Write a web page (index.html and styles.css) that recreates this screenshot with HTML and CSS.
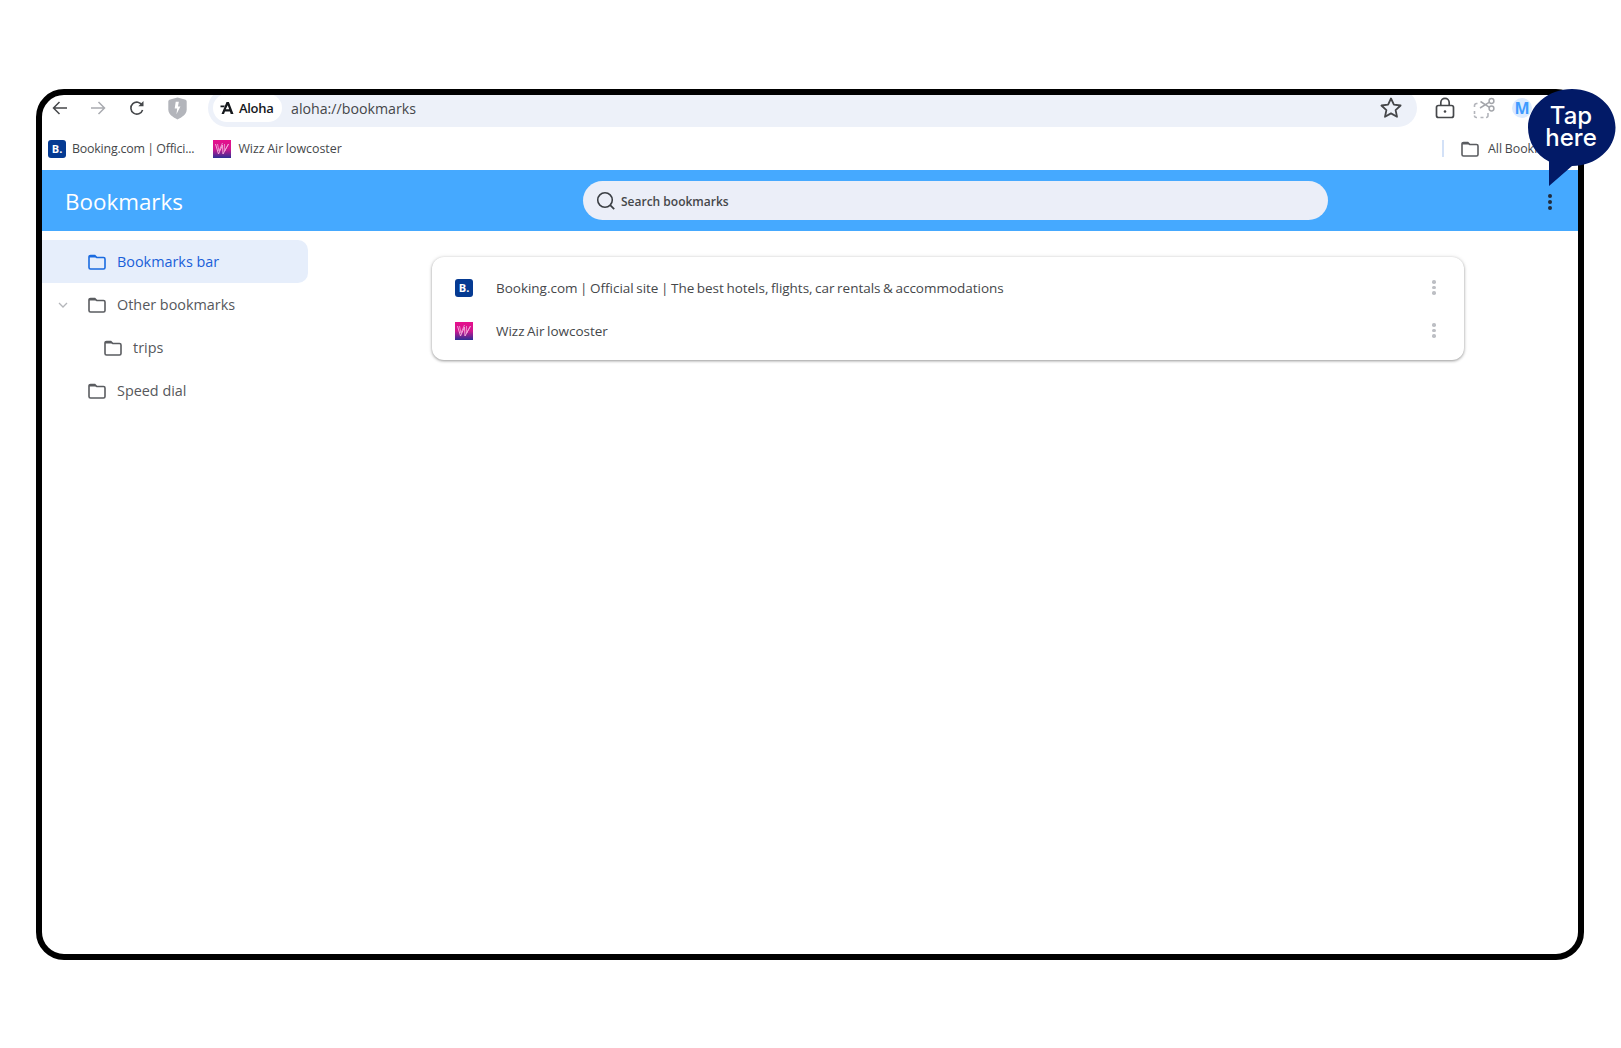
FILE: index.html
```html
<!DOCTYPE html>
<html lang="en">
<head>
<meta charset="utf-8">
<title>Bookmarks</title>
<link rel="stylesheet" href="styles.css">
</head>
<body>
<div class="stage">
  <div class="frame">
    <div class="toolbar">
      <div class="nav">
        <svg class="ic nav-back" viewBox="0 0 18 18"><path d="M16 9H3M8.500 3 2.500 9l6 6" fill="none" stroke="#45474a" stroke-width="1.500"/></svg>
        <svg class="ic nav-fwd" viewBox="0 0 18 18"><path d="M2 9h13M9.500 3l6 6-6 6" fill="none" stroke="#a9abb0" stroke-width="1.500"/></svg>
        <svg class="ic nav-reload" viewBox="0 0 18 18"><path d="M14.600 11a6 6 0 1 1-.4-4.700" fill="none" stroke="#45474a" stroke-width="1.600"/><path d="M15.500 2v5.200h-5.200z" fill="#45474a"/></svg>
        <svg class="ic nav-shield" viewBox="0 0 18 22"><path d="M9 .5 16 2.500c1 .3 1.800 1 1.800 2V12c0 4.500-4.500 7.500-8.800 9.500C4.700 19.500.2 16.500.2 12V4.500c0-1 .8-1.700 1.800-2z" fill="#b3b5bb"/><path d="M10.300 4.500H7.300L6.300 11h2.400L8 16.500l3.800-7.500H9.400z" fill="#fff"/></svg>
      </div>
      <div class="omnibox">
        <div class="chip">
          <svg class="chip-logo" viewBox="0 0 14 14"><path d="M6.500 1h2.400L13.500 13h-2.800l-.8-2.500H5L4 13H1.500zM7.700 4.300 5.800 8.300h3.400zM.5 4.500h4.300L3.900 6.300H.5z" fill="#15181c"/></svg>
          <span class="chip-text">Aloha</span>
        </div>
        <span class="url">aloha://bookmarks</span>
        <svg class="star" viewBox="0 0 24 24"><path d="m12 2.500 2.900 6.200 6.700.8-5 4.600 1.400 6.700-6-3.400-6 3.400 1.400-6.700-5-4.600 6.700-.8z" fill="none" stroke="#45474a" stroke-width="1.800" stroke-linejoin="round"/></svg>
      </div>
      <div class="actions">
        <svg class="lock" viewBox="0 0 20 22"><rect x="1.500" y="8.500" width="17" height="12" rx="2" fill="none" stroke="#45474a" stroke-width="1.700"/><path d="M5.800 8.500V5.500a4.200 4.200 0 0 1 8.400 0v3" fill="none" stroke="#45474a" stroke-width="1.700"/><circle cx="10" cy="14.500" r="1.300" fill="#45474a"/></svg>
        <svg class="scissors" viewBox="0 0 22 22"><path d="M1.500 10V8.500a2 2 0 0 1 2-2h1M1.500 14v3M4 20.500h-.5a2 2 0 0 1-2-2M7.500 20.500h3M13 20.500a2 2 0 0 0 2-2V16" fill="none" stroke="#b3b5bb" stroke-width="1.600"/><circle cx="18.500" cy="4" r="2.400" fill="none" stroke="#a4a6ab" stroke-width="1.500"/><circle cx="18.500" cy="11.500" r="2.400" fill="none" stroke="#a4a6ab" stroke-width="1.500"/><path d="M16.500 5.200 7 11M16.500 10.300 7.500 4.500" fill="none" stroke="#a4a6ab" stroke-width="1.500"/></svg>
        <div class="avatar">M</div>
      </div>
    </div>
    <div class="barline">
      <div class="bm-item bm-first">
        <span class="fav fav-booking">B.</span>
        <span class="bm-text">Booking.com | Offici...</span>
      </div>
      <div class="bm-item bm-second">
        <svg class="fav" viewBox="0 0 18 18"><use href="#wizz"/></svg>
        <span class="bm-text">Wizz Air lowcoster</span>
      </div>
      <div class="bar-right">
        <span class="bar-sep"></span>
        <svg class="folder" viewBox="0 0 18 16"><use href="#folder"/></svg>
        <span class="bm-text">All Bookmarks</span>
      </div>
    </div>
    <header class="head">
      <h1 class="title">Bookmarks</h1>
      <div class="search">
        <svg class="search-ic" viewBox="0 0 20 20"><circle cx="9" cy="9" r="7.300" fill="none" stroke="#3b3f45" stroke-width="1.600"/><path d="m14.200 14.200 4 4" stroke="#3b3f45" stroke-width="1.800"/></svg>
        <span class="search-text">Search bookmarks</span>
      </div>
      <div class="dots dots-head"><i></i><i></i><i></i></div>
    </header>
    <div class="body">
      <nav class="side">
        <div class="row row-sel">
          <span class="chev"></span>
          <svg class="folder" viewBox="0 0 18 16"><use href="#folder"/></svg>
          <span>Bookmarks bar</span>
        </div>
        <div class="row">
          <svg class="chev" viewBox="0 0 12 12"><path d="m2 4 4 4 4-4" fill="none" stroke="#b4b6ba" stroke-width="1.300"/></svg>
          <svg class="folder" viewBox="0 0 18 16"><use href="#folder"/></svg>
          <span>Other bookmarks</span>
        </div>
        <div class="row row-child">
          <span class="chev"></span>
          <svg class="folder" viewBox="0 0 18 16"><use href="#folder"/></svg>
          <span>trips</span>
        </div>
        <div class="row">
          <span class="chev"></span>
          <svg class="folder" viewBox="0 0 18 16"><use href="#folder"/></svg>
          <span>Speed dial</span>
        </div>
      </nav>
      <main class="content">
        <section class="card">
          <div class="item">
            <span class="fav fav-booking">B.</span>
            <span class="item-text">Booking.com | Official site | The best hotels, flights, car rentals &amp; accommodations</span>
            <div class="dots"><i></i><i></i><i></i></div>
          </div>
          <div class="item">
            <svg class="fav" viewBox="0 0 18 18"><use href="#wizz"/></svg>
            <span class="item-text">Wizz Air lowcoster</span>
            <div class="dots"><i></i><i></i><i></i></div>
          </div>
        </section>
      </main>
    </div>
  </div>
  <div class="callout">
    <svg class="callout-shape" viewBox="0 0 88 98"><path d="M44 0C68 0 87.500 17 87.500 38.500S68 77 44 77H44L21 97V72.500C8 66 0 53 0 38.500 0 17 20 0 44 0Z" fill="#021a67"/></svg>
    <div class="callout-text">Tap<br>here</div>
  </div>
</div>
<svg class="defs" width="0" height="0">
  <defs>
    <symbol id="folder" viewBox="0 0 18 16"><path d="M1 3a1.500 1.500 0 0 1 1.500-1.500h4.300L8.800 3.500h6.700A1.500 1.500 0 0 1 17 5v8.500a1.500 1.500 0 0 1-1.500 1.500h-13A1.500 1.500 0 0 1 1 13.500z" fill="none" stroke="currentColor" stroke-width="1.600"/><path d="M1 3a1.500 1.500 0 0 1 1.500-1.500h4.300L8.800 3.500H1z" fill="currentColor"/></symbol>
    <linearGradient id="wz" x1="0" y1="0" x2="0" y2="1"><stop offset="0" stop-color="#e6108c"/><stop offset=".5" stop-color="#d0168f"/><stop offset="1" stop-color="#2c2f95"/></linearGradient>
    <symbol id="wizz" viewBox="0 0 18 18"><rect width="18" height="18" fill="url(#wz)"/><path d="M2.500 4 5.500 14 9.500 5 10 14 15.500 4" fill="none" stroke="#f3a9da" stroke-width="1"/><path d="M4.500 4 6 11 9.500 3M11.500 4l.2 7 3.800-7" fill="none" stroke="#f3a9da" stroke-width=".8"/></symbol>
  </defs>
</svg>
</body>
</html>
```

FILE: styles.css
```css
* { box-sizing: border-box; }
html, body { margin: 0; background: #fff; }
body { font-family: "Open Sans", "Noto Sans", sans-serif; color: #45474a; padding: 89px 37px 88px 36px; }
.stage { position: relative; width: 1548px; }
.frame { height: 871px; border: 6px solid #000; border-radius: 28px; overflow: hidden; background: #fff; display: flex; flex-direction: column; }
.defs { position: absolute; }

.toolbar { height: 32px; flex: none; display: flex; align-items: flex-start; }
.nav { width: 166px; height: 26px; flex: none; display: flex; align-items: center; }
.ic { width: 18px; height: 18px; flex: none; display: block; }
.nav-back { margin-left: 9px; }
.nav-fwd { margin-left: 20px; }
.nav-reload { margin-left: 21px; }
.nav-shield { margin-left: 22px; width: 19px; height: 23px; }
.omnibox { width: 1209px; height: 38px; margin-top: -6px; flex: none; background: #edf1f9; border-radius: 19px; display: flex; align-items: center; padding: 0 14px 0 5px; }
.chip { width: 69px; height: 28px; background: #fff; border-radius: 14px; display: flex; align-items: center; gap: 5px; padding-left: 7px; flex: none; }
.chip-logo { width: 14px; height: 14px; flex: none; }
.chip-text { font-size: 13px; font-weight: 600; color: #15181c; letter-spacing: -.3px; }
.url { font-size: 14.200px; margin-left: 9px; flex: 1; color: #45474a; }
.star { width: 24px; height: 24px; flex: none; }
.actions { flex: 1; display: flex; align-items: center; height: 26px; }
.lock { width: 20px; height: 22px; margin-left: 18px; flex: none; }
.scissors { width: 22px; height: 22px; margin-left: 18px; flex: none; }
.avatar { width: 20px; height: 20px; margin-left: 17px; border-radius: 50%; background: #dcebff; color: #3f9bff; font-size: 16px; font-weight: 700; display: flex; align-items: center; justify-content: center; flex: none; }

.barline { height: 43px; flex: none; display: flex; align-items: center; padding: 0 0 0 6px; }
.bm-item { display: flex; align-items: center; gap: 6px; }
.bm-first { margin-right: 19px; }
.bm-first .bm-text { letter-spacing: -.2px; }
.bm-second { gap: 7px; }
.bm-text { font-size: 12.400px; word-spacing: -.6px; color: #45474a; white-space: nowrap; }
.fav { width: 18px; height: 18px; flex: none; display: block; }
.fav-booking { background: #053a92; color: #fff; border-radius: 3px; font-size: 11px; font-weight: 700; display: flex; align-items: center; justify-content: center; }
.bar-right { margin-left: auto; width: 136px; display: flex; align-items: center; overflow: hidden; color: #45474a; }
.bar-sep { width: 2px; height: 17px; background: #d3e1f7; flex: none; margin-right: 17px; }
.bar-right .folder { margin-right: 9px; }
.folder { width: 18px; height: 16px; flex: none; color: #5a5c60; display: block; }

.head { height: 61px; flex: none; background: #45a9ff; display: grid; grid-template-columns: 541px 745px 1fr; align-items: center; }
.title { margin: 4px 0 0 23px; font-size: 22.400px; font-weight: 400; color: #fff; line-height: 1; }
.search { height: 39px; background: #ebeef8; border-radius: 20px; display: flex; align-items: center; gap: 5px; padding: 1px 0 0 13px; }
.search-ic { width: 20px; height: 20px; flex: none; margin-top: -1px; }
.search-text { font-size: 12px; font-weight: 600; color: #45474a; margin-top: 1px; }
.dots { display: flex; flex-direction: column; gap: 2px; align-items: center; }
.dots i { width: 3.500px; height: 3.500px; border-radius: 50%; background: #bdbfc4; display: block; }
.dots-head { margin: 2px 0 0 220px; width: 4px; }
.dots-head i { background: #222b3a; width: 4px; height: 4px; }

.body { flex: 1; display: flex; min-height: 0; }
.side { width: 266px; flex: none; padding-top: 9px; }
.row { height: 43px; display: flex; align-items: center; font-size: 14.400px; font-weight: 500; color: #56585c; padding-left: 15px; border-radius: 0 10px 10px 0; }
.row .chev { width: 12px; height: 12px; flex: none; margin-right: 19px; }
.row .folder { margin-right: 11px; }
.row-child { padding-left: 31px; }
.row-sel { background: #e6eefb; color: #1a5fd9; }
.row-sel .folder { color: #1a6be0; }

.content { flex: 1; padding: 26px 114px 0 124px; }
.card { background: #fff; border-radius: 12px; height: 103px; padding: 9px 0; box-shadow: 0 1px 3px rgba(0,0,0,.38), 0 0 5px rgba(0,0,0,.08); }
.item { height: 43px; display: flex; align-items: center; padding: 0 28px 0 23px; }
.item-text { flex: 1; font-size: 13.500px; word-spacing: -.9px; letter-spacing: -.02px; color: #45474a; margin-left: 23px; }
.item .dots { width: 4px; }

.callout { position: absolute; left: 1492px; top: 0; width: 88px; height: 98px; }
.callout-shape { width: 88px; height: 98px; display: block; }
.callout-text { position: absolute; left: -1px; top: 16px; width: 88px; text-align: center; color: #fff; font-family: Inter, "Liberation Sans", sans-serif; font-size: 24px; line-height: 22px; font-weight: 500; }
```
